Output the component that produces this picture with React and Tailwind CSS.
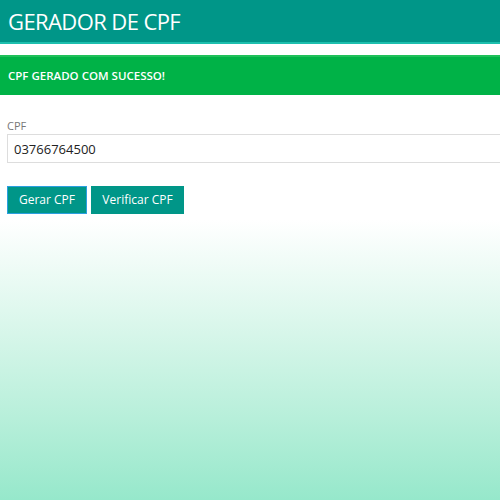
import React, { useState } from "react";

export default function App() {
  const [cpf, setCpf] = useState("03766764500");

  return (
    <div
      className="min-h-[500px] w-full overflow-hidden bg-gradient-to-b from-white from-[44%] to-[#96e8cb]"
      style={{ fontFamily: '"Open Sans", "Noto Sans", sans-serif' }}
    >
      {/* Header */}
      <div className="h-[44px] bg-[#009688] border-b-2 border-[#1dbfae] flex items-center px-2">
        <h1 className="text-[22px] text-white font-normal tracking-[-0.6px] leading-none">
          GERADOR DE CPF
        </h1>
      </div>

      {/* Alerta */}
      <div className="mt-[11px] h-[40px] bg-[#00b247] border-t-2 border-[#1fc05a] flex items-center px-2">
        <p className="text-[11.5px] text-white font-semibold">CPF GERADO COM SUCESSO!</p>
      </div>

      {/* Form */}
      <div className="pl-[7px] pt-[25px]">
        <label className="block text-[11px] text-[#777] leading-none mb-[3px]">CPF</label>
        <input
          value={cpf}
          onChange={(e) => setCpf(e.target.value)}
          className="w-[520px] h-[29px] border border-[#ddd] bg-white px-[6px] text-[13px] text-[#222] outline-none"
        />
        <div className="flex gap-[4px] mt-[23px]">
          <button className="h-[28px] w-[80px] bg-[#009688] text-white text-[12px] border border-[#2b9fe0]">
            Gerar CPF
          </button>
          <button className="h-[28px] w-[93px] bg-[#009688] text-white text-[12px] border border-[#009688]">
            Verificar CPF
          </button>
        </div>
      </div>
    </div>
  );
}
